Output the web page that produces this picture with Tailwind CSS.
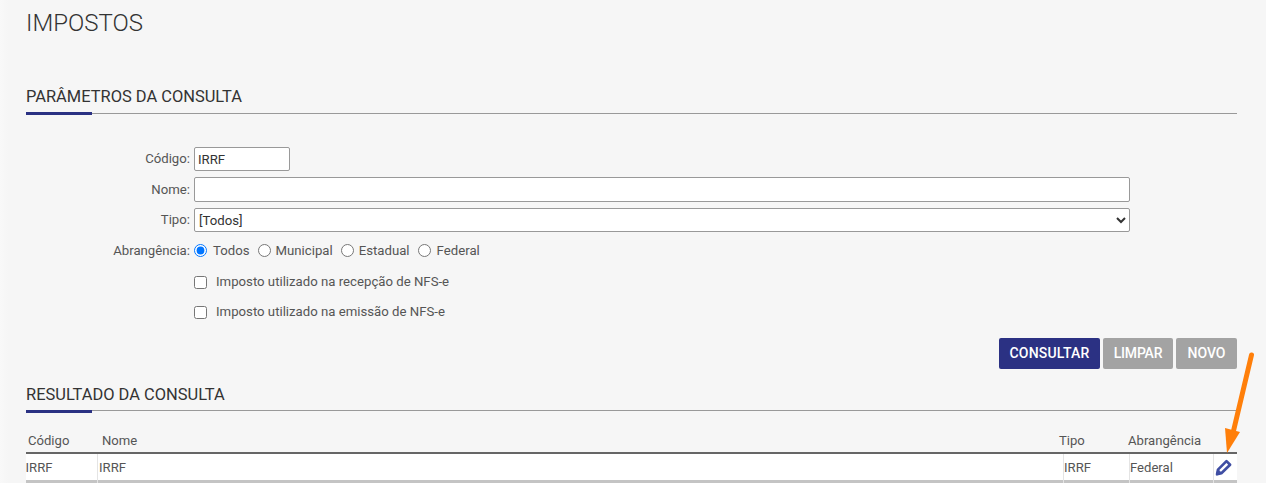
<!DOCTYPE html>
<html lang="pt-BR">
<head>
<meta charset="utf-8">
<title>Impostos</title>
<script src="https://cdn.jsdelivr.net/npm/@tailwindcss/browser@4"></script>
</head>
<body class="bg-[#f6f6f6] font-['Roboto',sans-serif] text-[#555] overflow-hidden">
<div class="relative h-[483px] overflow-hidden pl-[26px] pr-[29px]">
  <div class="absolute inset-y-0 left-0 w-[8px] bg-gradient-to-r from-[#f9f9f9] to-[#f6f6f6]"></div>
  <h1 class="relative h-[85px] pt-[8px] text-[24px] leading-[30px] font-light text-[#333]">IMPOSTOS</h1>

  <section>
    <div class="relative h-[29px] border-b border-[#999] pt-[1px]">
      <h2 class="text-[16.45px] leading-[22px] text-[#333]">PARÂMETROS DA CONSULTA</h2>
      <div class="absolute left-0 top-[27px] h-[3px] w-[66px] bg-[#2b3183]"></div>
    </div>

    <form class="pt-[33px] text-[13.2px]">
      <div class="flex h-[24px] items-center gap-[4px]">
        <label class="w-[164px] text-right">Código:</label>
        <input value="IRRF" class="h-[24px] w-[96px] rounded-[2px] border border-[#999] bg-white px-[3px] pt-[1px] text-[13.2px] text-[#333]">
      </div>
      <div class="mt-[6px] flex h-[25px] items-center gap-[4px]">
        <label class="w-[164px] text-right">Nome:</label>
        <input class="h-[25px] w-[936px] rounded-[2px] border border-[#999] bg-white px-[3px]">
      </div>
      <div class="mt-[6px] flex h-[24px] items-center gap-[4px]">
        <label class="w-[164px] text-right">Tipo:</label>
        <select class="h-[24px] w-[936px] rounded-[2px] border border-[#999] bg-white pl-0 text-[13.2px] text-[#333]">
          <option>[Todos]</option>
        </select>
      </div>
      <div class="mt-[7px] flex h-[24px] items-center">
        <label class="w-[164px] text-right">Abrangência:</label>
        <div class="ml-[4px] flex items-center">
          <input type="radio" name="abr" checked class="m-0 size-[13px] accent-[#0075ff]"><span class="ml-[6px]">Todos</span>
          <input type="radio" name="abr" class="m-0 ml-[8px] size-[13px]"><span class="ml-[5px]">Municipal</span>
          <input type="radio" name="abr" class="m-0 ml-[8px] size-[13px]"><span class="ml-[5px]">Estadual</span>
          <input type="radio" name="abr" class="m-0 ml-[8px] size-[13px]"><span class="ml-[6px]">Federal</span>
        </div>
      </div>
      <div class="mt-[7px] flex h-[24px] items-center pl-[168px]">
        <input type="checkbox" class="m-0 size-[13px]"><span class="ml-[9px]">Imposto utilizado na recepção de NFS-e</span>
      </div>
      <div class="mt-[6px] flex h-[24px] items-center pl-[168px]">
        <input type="checkbox" class="m-0 size-[13px]"><span class="ml-[9px]">Imposto utilizado na emissão de NFS-e</span>
      </div>

      <div class="mt-[14px] flex justify-end gap-[3px] text-[14px] font-medium text-white">
        <button type="button" class="h-[31px] w-[101px] rounded-[2px] bg-[#2b3183] tracking-[0.2px]">CONSULTAR</button>
        <button type="button" class="h-[31px] w-[70px] rounded-[2px] bg-[#a3a3a3] tracking-[-0.2px]">LIMPAR</button>
        <button type="button" class="h-[31px] w-[61px] rounded-[2px] bg-[#a3a3a3]">NOVO</button>
      </div>
    </form>
  </section>

  <section class="mt-[13px]">
    <div class="relative h-[29px] border-b border-[#999] pt-[1px]">
      <h2 class="text-[16.45px] leading-[24px] text-[#333]">RESULTADO DA CONSULTA</h2>
      <div class="absolute left-0 top-[28px] h-[3px] w-[66px] bg-[#2b3183]"></div>
    </div>

    <div class="mt-[18px] text-[13.1px]">
      <div class="grid h-[25px] grid-cols-[74px_959px_69px_109px] items-center border-b-[2px] border-[#666]">
        <span class="pl-[2px]">Código</span>
        <span class="pl-[2px]">Nome</span>
        <span>Tipo</span>
        <span>Abrangência</span>
      </div>
      <div class="grid h-[26px] grid-cols-[71px_966px_66px_84px_24px] bg-white leading-[27px]">
        <span class="-ml-[0.5px]">IRRF</span>
        <span class="border-l border-[#e4e4e4] pl-[1px]">IRRF</span>
        <span class="border-l border-[#e4e4e4]">IRRF</span>
        <span class="border-l border-[#e4e4e4]">Federal</span>
        <span class="flex items-center justify-center border-l border-[#e4e4e4] pr-[5px]">
          <svg viewBox="0 0 16 16" class="size-[17px]" fill="none" stroke="#3f4ea3" stroke-width="2.5" stroke-linejoin="round" aria-label="Editar">
            <path d="M10.8 2 14.2 5.4 6 13.4 2 14.2 2.8 10Z"/>
            <path d="M2.8 10 6 13.4 1.2 15Z" fill="#3f4ea3" stroke-width="1"/>
          </svg>
        </span>
      </div>
      <div class="grid h-[10px] grid-cols-[71px_966px_66px_84px_24px] bg-[#c4c4c4]">
        <span></span>
        <span class="border-l border-[#e4e4e4]"></span>
        <span class="border-l border-[#e4e4e4]"></span>
        <span class="border-l border-[#e4e4e4]"></span>
        <span class="border-l border-[#e4e4e4]"></span>
      </div>
    </div>
  </section>

  <svg class="absolute left-[1220px] top-[348px] h-[110px] w-[40px]" viewBox="0 0 40 110" fill="none">
    <path d="M31.5 7 13 85" stroke="#ff7f0a" stroke-width="5" stroke-linecap="round"/>
    <path d="M5 80 20 84 7 105Z" fill="#ff7f0a"/>
  </svg>
</div>
</body>
</html>
